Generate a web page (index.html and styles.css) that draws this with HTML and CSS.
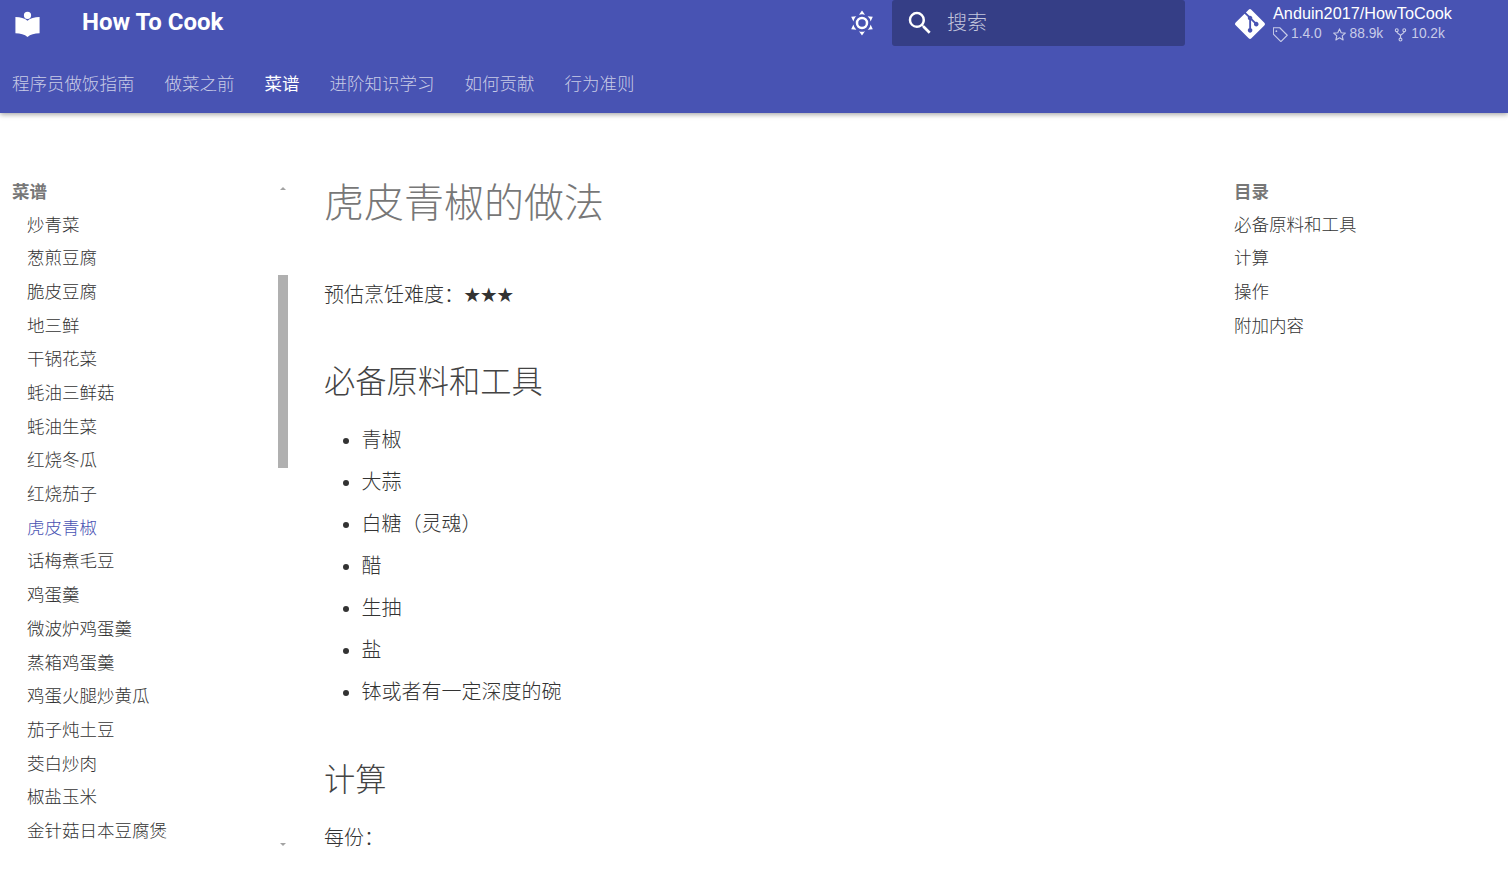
FILE: index.html
```html
<!DOCTYPE html>
<html lang="zh-CN">
  <head>
    <meta charset="UTF-8" />
    <meta name="viewport" content="width=device-width, initial-scale=1.0" />
    <title>虎皮青椒的做法 - How To Cook</title>
    <link rel="stylesheet" href="styles.css">
  </head>
  <body>
    <header class="top">
      <div class="bar">
        <a class="logo" href="#">
          <svg viewBox="0 0 24 24" width="29" height="29"><path fill="#fff" d="M12 3a3 3 0 0 0-3 3 3 3 0 0 0 3 3 3 3 0 0 0 3-3 3 3 0 0 0-3-3m0 7.5C9.6 8.4 6.2 7.6 2 7.5v13.4c4.2.1 7.6 1 10 3.1 2.4-2.1 5.8-3 10-3.1V7.5c-4.2.1-7.6.9-10 3z"/></svg>
        </a>
        <div class="title">How To Cook</div>
        <button class="theme">
          <svg viewBox="0 0 24 24" width="30" height="30"><path fill="#fff" d="M12 7a5 5 0 0 1 5 5 5 5 0 0 1-5 5 5 5 0 0 1-5-5 5 5 0 0 1 5-5m0 2a3 3 0 0 0-3 3 3 3 0 0 0 3 3 3 3 0 0 0 3-3 3 3 0 0 0-3-3m0-7 2.39 3.42C13.65 5.15 12.84 5 12 5c-.84 0-1.65.15-2.39.42L12 2M3.34 7l4.16-.35A7.2 7.2 0 0 0 5.94 8.5c-.44.74-.69 1.5-.83 2.29L3.34 7m.02 10 1.76-3.77a7.131 7.131 0 0 0 2.38 4.14L3.36 17M20.65 7l-1.77 3.79a7.023 7.023 0 0 0-2.38-4.15l4.15.36m-.01 10-4.14.36c.59-.51 1.12-1.14 1.54-1.86.42-.73.69-1.5.83-2.28L20.64 17M12 22l-2.41-3.44c.74.27 1.55.44 2.41.44.82 0 1.63-.17 2.37-.44L12 22z"/></svg>
        </button>
        <div class="search">
          <svg viewBox="0 0 24 24" width="30" height="30"><path fill="#fff" d="M9.5 3A6.5 6.5 0 0 1 16 9.5c0 1.61-.59 3.09-1.56 4.23l.27.27h.79l5 5-1.5 1.5-5-5v-.79l-.27-.27A6.516 6.516 0 0 1 9.5 16 6.5 6.5 0 0 1 3 9.5 6.5 6.5 0 0 1 9.5 3m0 2C7 5 5 7 5 9.5S7 14 9.5 14 14 12 14 9.5 12 5 9.5 5z"/></svg>
          <span>搜索</span>
        </div>
        <a class="source" href="#">
          <svg class="git" viewBox="0 0 448 512" width="30" height="34"><path fill="#fff" d="M439.55 236.05 244 40.45a28.87 28.87 0 0 0-40.81 0l-40.66 40.63 51.52 51.52c27.06-9.14 52.68 16.77 43.39 43.68l49.66 49.66c34.23-11.8 61.18 31 35.47 56.69-26.49 26.49-70.21-2.87-56-37.34L240.22 199v121.85c25.3 12.54 22.26 41.85 9.08 55a34.34 34.34 0 0 1-48.55 0c-17.57-17.6-11.07-46.91 11.25-56v-123c-20.8-8.51-24.6-30.74-18.64-45L142.57 101 8.45 235.14a28.86 28.86 0 0 0 0 40.81l195.61 195.6a28.86 28.86 0 0 0 40.8 0l194.69-194.69a28.86 28.86 0 0 0 0-40.81z"/></svg>
          <div class="repo">
            <div class="repo-name">Anduin2017/HowToCook</div>
            <div class="facts">
              <span class="fact">
                <svg viewBox="2 2 20 20" width="15" height="15"><path fill="none" stroke="#c8cce8" stroke-width="1.5" stroke-linejoin="round" d="M2.5 3.5v8l10 10 8.5-8.5-10-10h-8.5z"/><circle cx="6.5" cy="7.5" r="1.2" fill="#c8cce8"/></svg>
                1.4.0
              </span>
              <span class="fact">
                <svg viewBox="0 0 24 24" width="15" height="15"><path fill="none" stroke="#c8cce8" stroke-width="1.8" stroke-linejoin="round" d="M12 3l2.7 6.1 6.6.7-5 4.4 1.5 6.5L12 17.3l-5.8 3.4 1.5-6.5-5-4.4 6.6-.7z"/></svg>
                88.9k
              </span>
              <span class="fact">
                <svg viewBox="0 0 24 24" width="15" height="15"><g fill="none" stroke="#c8cce8" stroke-width="1.8"><circle cx="6" cy="5" r="2.3"/><circle cx="18" cy="5" r="2.3"/><circle cx="12" cy="20" r="2.3"/><path d="M6 7.3c0 4 6 3.5 6 6.7v3.7M18 7.3c0 4-6 3.5-6 6.7"/></g></svg>
                10.2k
              </span>
            </div>
          </div>
        </a>
      </div>
      <nav class="tabs">
        <a href="#">程序员做饭指南</a>
        <a href="#">做菜之前</a>
        <a href="#" class="on">菜谱</a>
        <a href="#">进阶知识学习</a>
        <a href="#">如何贡献</a>
        <a href="#">行为准则</a>
      </nav>
    </header>

    <div class="page">
      <aside class="side">
        <div class="side-title">菜谱</div>
        <ul class="side-list">
          <li>炒青菜</li>
          <li>葱煎豆腐</li>
          <li>脆皮豆腐</li>
          <li>地三鲜</li>
          <li>干锅花菜</li>
          <li>蚝油三鲜菇</li>
          <li>蚝油生菜</li>
          <li>红烧冬瓜</li>
          <li>红烧茄子</li>
          <li class="active">虎皮青椒</li>
          <li>话梅煮毛豆</li>
          <li>鸡蛋羹</li>
          <li>微波炉鸡蛋羹</li>
          <li>蒸箱鸡蛋羹</li>
          <li>鸡蛋火腿炒黄瓜</li>
          <li>茄子炖土豆</li>
          <li>茭白炒肉</li>
          <li>椒盐玉米</li>
          <li>金针菇日本豆腐煲</li>
        </ul>
        <div class="scroll-up"></div>
        <div class="scroll-thumb"></div>
        <div class="scroll-down"></div>
      </aside>

      <main class="content">
        <h1>虎皮青椒的做法</h1>
        <p class="level">预估烹饪难度：<span class="stars">★★★</span></p>
        <h2>必备原料和工具</h2>
        <ul>
          <li>青椒</li>
          <li>大蒜</li>
          <li>白糖（灵魂）</li>
          <li>醋</li>
          <li>生抽</li>
          <li>盐</li>
          <li>钵或者有一定深度的碗</li>
        </ul>
        <h2 class="calc">计算</h2>
        <p>每份：</p>
      </main>

      <aside class="toc">
        <div class="side-title">目录</div>
        <ul class="toc-list">
          <li>必备原料和工具</li>
          <li>计算</li>
          <li>操作</li>
          <li>附加内容</li>
        </ul>
      </aside>
    </div>
  </body>
</html>
```

FILE: styles.css
```css
html,
body {
  margin: 0;
  height: 100%;
  overflow: hidden;
}

body {
  background-color: #fff;
  color: #333;
  font-family: Roboto, "Noto Sans CJK SC", sans-serif;
  font-weight: 300;
}

a {
  color: inherit;
  text-decoration: none;
}

ul {
  margin: 0;
  padding: 0;
}

/* header */
.top {
  height: 113px;
  background-color: #4853b3;
  color: #fff;
  box-shadow: 0 0 5px rgba(0, 0, 0, 0.15), 0 2px 5px rgba(0, 0, 0, 0.25);
}

.bar {
  display: flex;
  align-items: flex-start;
  height: 60px;
}

.logo {
  display: flex;
  margin: 7.5px 0 0 13px;
}

.title {
  margin-left: 40px;
  font-size: 24px;
  font-weight: 700;
  line-height: 44px;
}

.theme {
  display: flex;
  margin: 8px 0 0 auto;
  padding: 0;
  background: none;
  border: none;
}

.search {
  display: flex;
  align-items: center;
  gap: 12px;
  box-sizing: border-box;
  width: 293px;
  height: 46px;
  margin-left: 15px;
  padding-left: 13px;
  background-color: #353e86;
  border-radius: 3px;
}

.search span {
  font-size: 20px;
  line-height: 28px;
  color: #c3c6dd;
}

.source {
  display: flex;
  align-items: flex-start;
  gap: 8px;
  width: 258px;
  margin-left: 50px;
  margin-right: 15px;
}

.git {
  margin-top: 7px;
}

.repo-name {
  font-family: "Liberation Sans", sans-serif;
  font-size: 16.25px;
  font-weight: 400;
  line-height: 21px;
  margin-top: 3px;
}

.facts {
  display: flex;
  gap: 10px;
  margin-top: 1px;
  font-family: "Liberation Sans", sans-serif;
  font-size: 13.75px;
  font-weight: 400;
  line-height: 18px;
  color: #c8cce8;
}

.fact {
  display: flex;
  align-items: center;
  gap: 3px;
}

.tabs {
  display: flex;
  gap: 30px;
  padding: 0 12px;
  font-size: 17.5px;
  line-height: 48px;
  color: #c8cbe6;
}

.tabs .on {
  color: #fff;
  font-weight: 400;
}

/* three columns */
.page {
  display: flex;
  align-items: flex-start;
  padding-top: 62px;
}

.side {
  position: relative;
  box-sizing: border-box;
  width: 288px;
  height: 696px;
  padding-left: 12px;
  font-size: 17.5px;
}

.side-title {
  padding-top: 1px;
  font-size: 17.5px;
  font-weight: 700;
  line-height: 32.6px;
  color: #777;
}

.side-list {
  list-style: none;
  padding-left: 15px;
}

.side-list li {
  line-height: 33.69px;
}

.side-list .active {
  color: #4853b3;
}

.scroll-thumb {
  position: absolute;
  top: 100px;
  right: 0;
  width: 10px;
  height: 193px;
  background-color: #b0b0b0;
}

.scroll-up,
.scroll-down {
  position: absolute;
  right: 2px;
  width: 0;
  height: 0;
  border-left: 3px solid transparent;
  border-right: 3px solid transparent;
}

.scroll-up {
  top: 12px;
  border-bottom: 3px solid #a3a3a3;
}

.scroll-down {
  top: 668px;
  border-top: 3px solid #a3a3a3;
}

.content {
  flex: 1;
  min-width: 0;
  padding-left: 36px;
  font-size: 20px;
}

.content h1 {
  margin: 3px 0 0;
  font-size: 40px;
  font-weight: 300;
  line-height: 52px;
  color: #777;
}

.content h2 {
  margin: 52px 0 0;
  font-size: 31.25px;
  font-weight: 300;
  line-height: 40px;
  color: #444;
}

.content ul {
  margin-top: 22px;
  padding-left: 37.5px;
}

.content li {
  line-height: 30px;
  margin-bottom: 12px;
}

.content .calc {
  margin-top: 54px;
}

.content p {
  margin: 21px 0 0;
}

.content .level {
  margin-top: 50px;
  line-height: 30px;
}

.stars {
  font-size: 16.5px;
  vertical-align: 1px;
}

.toc {
  box-sizing: border-box;
  width: 274px;
  font-size: 17.5px;
}

.toc-list {
  list-style: none;
}

.toc-list li {
  line-height: 33.69px;
}
```
